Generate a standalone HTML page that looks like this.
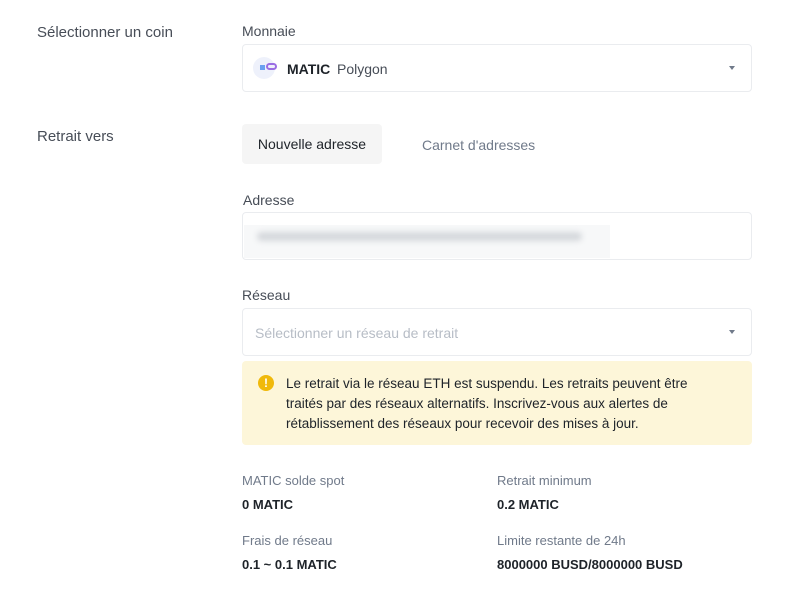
<!DOCTYPE html><html><head><style>
body{margin:0;width:791px;height:607px;background:#fff;font-family:"Liberation Sans",sans-serif;font-size:14px;color:#1e2329;position:relative;overflow:hidden}
.a{position:absolute;white-space:nowrap}
.lbl{color:#474d57}
.box{position:absolute;left:242px;width:508px;border:1px solid #eaecef;border-radius:4px;background:#fff}
.car{position:absolute;right:16px;top:21px;width:0;height:0;border-left:3.5px solid transparent;border-right:3.5px solid transparent;border-top:4px solid #707a8a}
.g{color:#707a8a;font-size:13px}
.b{font-weight:bold;font-size:13px}
</style></head><body>
<div class="a lbl" style="left:37px;top:24px;font-size:15px">Sélectionner un coin</div>
<div class="a lbl" style="left:242px;top:23px">Monnaie</div>
<div class="box" style="top:44px;height:46px">
 <div class="a" style="left:10px;top:12px;width:22px;height:22px;border-radius:50%;background:#eef1fb"></div>
 <div class="a" style="left:17px;top:20px;width:5px;height:5px;background:#6aa0f0"></div>
 <div class="a" style="left:23px;top:18px;width:11px;height:7px;border:2px solid #9b6ee3;border-radius:4px;box-sizing:border-box"></div>
 <div class="a" style="left:44px;top:16px;font-weight:bold;font-size:14px">MATIC</div>
 <div class="a" style="left:94px;top:16px;color:#474d57">Polygon</div>
 <div class="car"></div>
</div>
<div class="a lbl" style="left:37px;top:128px;font-size:15px">Retrait vers</div>
<div class="a" style="left:242px;top:124px;width:140px;height:40px;background:#f5f5f5;border-radius:4px;text-align:center;line-height:40px">Nouvelle adresse</div>
<div class="a" style="left:422px;top:137px;color:#707a8a">Carnet d'adresses</div>
<div class="a lbl" style="left:243px;top:192px">Adresse</div>
<div class="box" style="top:212px;height:46px">
 <div class="a" style="left:1px;top:12px;width:366px;height:33px;background:#f7f8f9"></div>
 <div class="a" style="left:14px;top:19px;width:325px;height:9px;background:#d5d8dc;border-radius:5px;filter:blur(3px)"></div>
</div>
<div class="a lbl" style="left:242px;top:287px">Réseau</div>
<div class="box" style="top:308px;height:46px">
 <div class="a" style="left:12px;top:16px;color:#b7bdc6">Sélectionner un réseau de retrait</div>
 <div class="car"></div>
</div>
<div class="a" style="left:242px;top:361px;width:510px;height:84px;background:#fdf6d9;border-radius:4px">
 <div class="a" style="left:16px;top:14px;width:16px;height:16px;border-radius:50%;background:#f0b90b;color:#fff;font-weight:bold;font-size:12px;text-align:center;line-height:16px">!</div>
 <div class="a" style="left:44px;top:13px;font-size:13.5px;line-height:20px;color:#1e2329;white-space:normal;width:425px">Le retrait via le réseau ETH est suspendu. Les retraits peuvent être traités par des réseaux alternatifs. Inscrivez-vous aux alertes de rétablissement des réseaux pour recevoir des mises à jour.</div>
</div>
<div class="a g" style="left:242px;top:473px">MATIC solde spot</div>
<div class="a b" style="left:242px;top:497px">0 MATIC</div>
<div class="a g" style="left:497px;top:473px">Retrait minimum</div>
<div class="a b" style="left:497px;top:497px">0.2 MATIC</div>
<div class="a g" style="left:242px;top:533px">Frais de réseau</div>
<div class="a b" style="left:242px;top:557px">0.1 ~ 0.1 MATIC</div>
<div class="a g" style="left:497px;top:533px">Limite restante de 24h</div>
<div class="a b" style="left:497px;top:557px">8000000 BUSD/8000000 BUSD</div>
</body></html>
